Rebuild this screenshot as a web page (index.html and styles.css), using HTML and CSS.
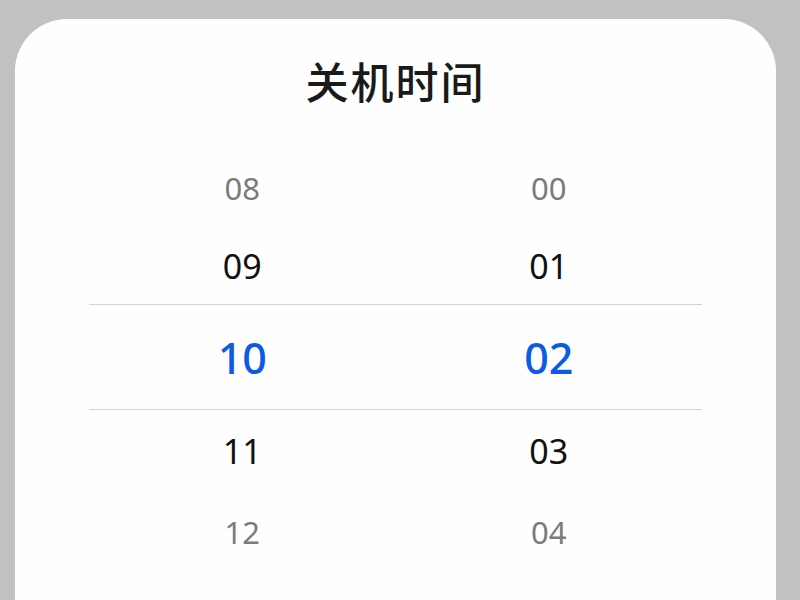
FILE: index.html
```html
<!DOCTYPE html>
<html lang="zh-CN">
<head>
    <meta charset="UTF-8">
    <meta name="viewport" content="width=device-width, initial-scale=1.0">
    <title>关机时间</title>
    <link rel="stylesheet" href="styles.css">
</head>
<body>
    <div class="dialog">
        <h1 class="dialog-title">关机时间</h1>
        <div class="picker">
            <div class="picker-row far">
                <span>08</span>
                <span>00</span>
            </div>
            <div class="picker-row near top">
                <span>09</span>
                <span>01</span>
            </div>
            <div class="picker-row selected">
                <span>10</span>
                <span>02</span>
            </div>
            <div class="picker-row near bottom">
                <span>11</span>
                <span>03</span>
            </div>
            <div class="picker-row far">
                <span>12</span>
                <span>04</span>
            </div>
        </div>
    </div>
</body>
</html>
```

FILE: styles.css
```css
html, body {
    height: 100%;
}
body {
    margin: 0;
    padding: 19px 24px 0 15px;
    box-sizing: border-box;
    background-color: #c0c1c2;
    font-family: "Noto Sans", "Noto Sans CJK SC", sans-serif;
    overflow: hidden;
}
.dialog {
    box-sizing: border-box;
    background-color: #fefefe;
    border-radius: 52px 52px 0 0;
    height: 581px;
    padding: 37px 74px 0 74px;
}
.dialog-title {
    margin: 0;
    text-align: center;
    font-family: "Noto Sans CJK SC", sans-serif;
    font-size: 43px;
    font-weight: 500;
    line-height: 48px;
    color: #1a1a1a;
    letter-spacing: 2px;
}
.picker {
    margin-top: 44px;
}
.picker-row {
    display: grid;
    grid-template-columns: 1fr 1fr;
    text-align: center;
    align-items: center;
}
.picker-row span {
    display: block;
}
.far {
    height: 80px;
    font-size: 31px;
    color: #7b7b7b;
}
.near {
    font-size: 34px;
    color: #111;
}
.near.top {
    height: 76px;
}
.near.bottom {
    height: 82px;
}
.selected {
    height: 104px;
    border-top: 1px solid #d2d2d2;
    border-bottom: 1px solid #d2d2d2;
    font-size: 43px;
    font-weight: 500;
    color: #0d5ae5;
}
```
